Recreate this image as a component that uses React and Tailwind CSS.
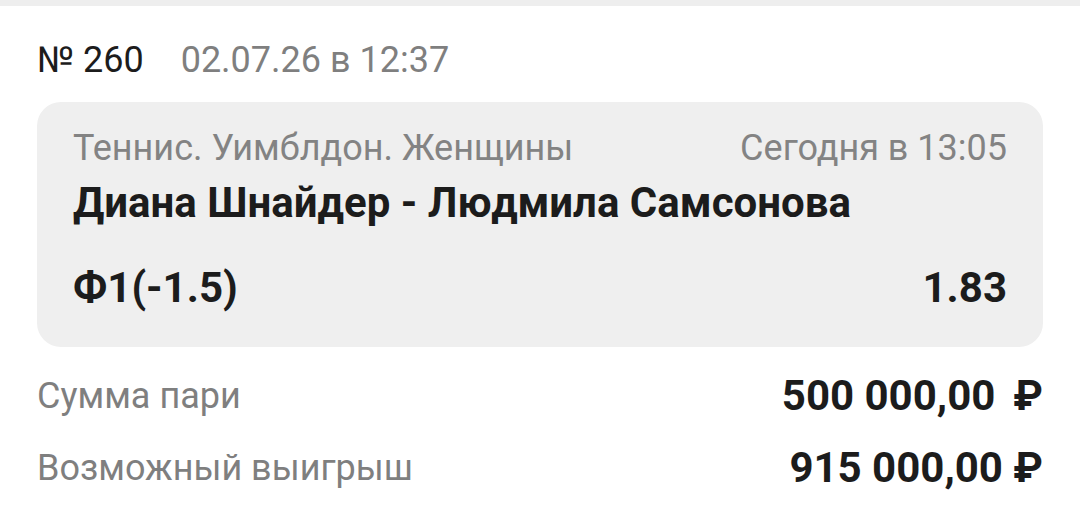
export default function App() {
  return (
    <div className="min-h-[519px] w-[1080px] bg-white font-['Roboto',sans-serif] text-[#1c1c1c]">
      <div className="h-[6px] bg-[#eeeeee]" />

      <div className="px-[37px]">
        {/* bet number and date */}
        <div className="flex h-[96px] items-center gap-[37px] pt-[12px] text-[36px] leading-none">
          <span>№ 260</span>
          <span className="text-[#7f7f7f]">02.07.26 в 12:37</span>
        </div>

        {/* event card */}
        <div className="rounded-[24px] bg-[#efefef] px-[36px] pt-[28px] pb-[37px]">
          <div className="flex items-center justify-between text-[36px] leading-[36px] text-[#838383]">
            <span>Теннис. Уимблдон. Женщины</span>
            <span>Сегодня в 13:05</span>
          </div>
          <div className="mt-[15px] text-[42px] font-bold leading-[44px]">Диана Шнайдер - Людмила Самсонова</div>
          <div className="mt-[41px] flex items-center justify-between text-[42px] font-bold leading-[44px]">
            <span>Ф1(-1.5)</span>
            <span>1.83</span>
          </div>
        </div>

        {/* amounts */}
        <div className="mt-[13px] leading-[72px]">
          <div className="flex items-center justify-between">
            <span className="text-[36px] text-[#7f7f7f]">Сумма пари</span>
            <span className="text-[42px] font-bold">
              500 000,00<span className="ml-[18px]">₽</span>
            </span>
          </div>
          <div className="flex items-center justify-between">
            <span className="text-[36px] text-[#7f7f7f]">Возможный выигрыш</span>
            <span className="text-[42px] font-bold">915 000,00 ₽</span>
          </div>
        </div>
      </div>
    </div>
  );
}
